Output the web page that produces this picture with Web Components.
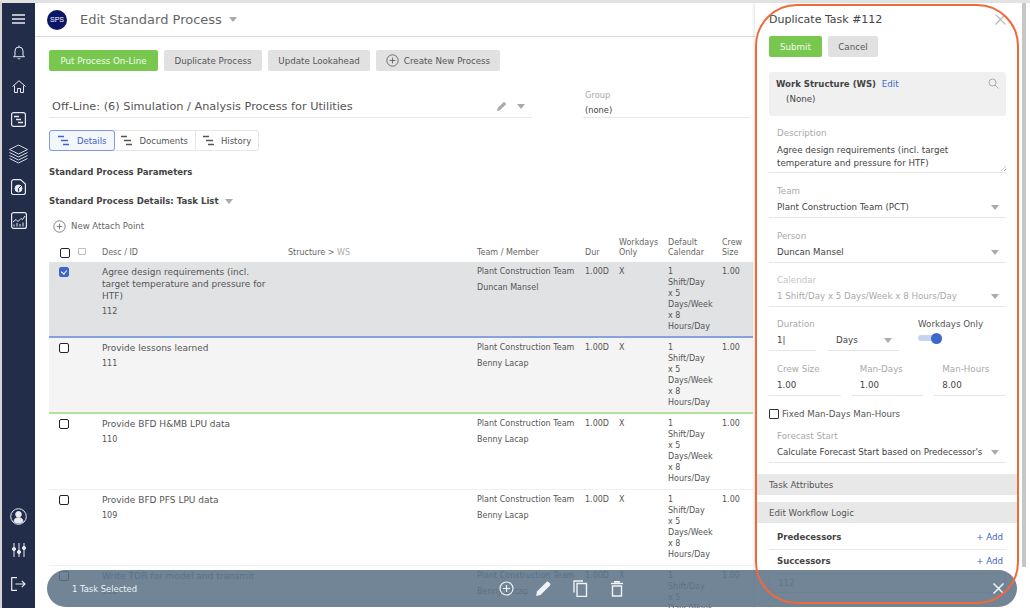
<!DOCTYPE html>
<html>
<head>
<meta charset="utf-8">
<title>Edit Standard Process</title>
<style>
  html, body { margin: 0; height: 608px; overflow: hidden; background: #fff; }
  body { font-family: "DejaVu Sans", sans-serif; color: #444; }
</style>
</head>
<body>
<app-shell>
  <side-nav slot="nav"></side-nav>
  <process-page slot="main"></process-page>
  <task-panel slot="panel"></task-panel>
</app-shell>
<selection-bar></selection-bar>
<focus-ring></focus-ring>

<script>
// Shared icon strings, the task bars icon is used a few times
const ganttIcon = `<svg width="11" height="11" viewBox="0 0 11 11" fill="none" stroke="currentColor" stroke-width="1.4"><path d="M0 1.500h6M3 5.500h7M5 9.500h6"/></svg>`;
const plusCircle = (size) => `<svg width="${size}" height="${size}" viewBox="0 0 16 16" fill="none" stroke="currentColor" stroke-width="1"><circle cx="8" cy="8" r="7"/><path d="M8 4.500v7M4.500 8h7"/></svg>`;
const caret = `<svg width="8" height="5" viewBox="0 0 8 5"><path d="M0 0h8L4 5z" fill="#aaa"/></svg>`;

class AppShell extends HTMLElement {
  constructor() {
    super();
    this.attachShadow({mode: 'open'}).innerHTML = `
      <style>
        :host { display: flex; height: 608px; width: 1030px; box-sizing: border-box; border-left: 2px solid #d4d4d4; border-top: 3px solid #e2e2e2; overflow: hidden; }
        .main { flex: 1; min-width: 0; }
      </style>
      <slot name="nav"></slot>
      <div class="main"><slot name="main"></slot></div>
      <slot name="panel"></slot>`;
  }
}

class SideNav extends HTMLElement {
  constructor() {
    super();
    this.attachShadow({mode: 'open'}).innerHTML = `
      <style>
        :host { display: flex; flex-direction: column; align-items: center; width: 33px; height: 100%; background: #222d4a; color: #e8eaf0; box-sizing: border-box; flex: none; }
        svg { display: block; fill: none; stroke: currentColor; stroke-width: 1; }
        .group { display: flex; flex-direction: column; align-items: center; width: 100%; }
        .cell { height: 33.700px; display: flex; align-items: center; justify-content: center; }
        .top { margin-top: -1px; }
        .spacer { flex: 1; }
        .bottom { padding-bottom: 7px; }
      </style>
      <div class="group top">
        <div class="cell"><svg width="13" height="10" viewBox="0 0 13 10" style="stroke-width:1.6"><path d="M0 1h13M0 5h13M0 9h13"/></svg></div>
        <div class="cell"><svg width="12" height="15" viewBox="0 0 12 15"><path d="M2 10.500V6a4 4 0 0 1 8 0v4.500l1.500 1.200H.5zM6 .5V2M4.800 13.200a1.300 1.300 0 0 0 2.400 0"/></svg></div>
        <div class="cell"><svg width="14" height="13" viewBox="0 0 14 13"><path d="M.5 6.500L7 .7l6.500 5.800M2.500 5.500v7h3V8.500h3v4h3v-7"/></svg></div>
        <div class="cell"><svg width="15" height="15" viewBox="0 0 15 15"><rect x=".6" y=".6" width="13.800" height="13.800" rx="2" stroke-width="1.200"/><path d="M3 4.500h5M5 7.500h5M7 10.500h5" stroke-width="1.300"/></svg></div>
        <div class="cell"><svg width="19" height="20" viewBox="0 0 19 20" style="stroke-width:.9"><path d="M9.500 1l9 4.500-9 4.500-9-4.500zM.5 8.500l9 4.500 9-4.500M.5 11.500l9 4.500 9-4.500M.5 14.500l9 4.500 9-4.500"/></svg></div>
        <div class="cell"><svg width="15" height="16" viewBox="0 0 15 16"><path d="M.6 2.500A2 2 0 0 1 2.500.6h7l4.900 4.400v8.500a2 2 0 0 1-2 2h-10a2 2 0 0 1-2-2z" stroke-width="1.200"/><circle cx="7.500" cy="9.500" r="3.500" fill="currentColor"/><path d="M7.500 9.500l2.500-2.500M7.500 9.500v3" stroke="#222d4a"/></svg></div>
        <div class="cell"><svg width="16" height="17" viewBox="0 0 16 17"><rect x=".6" y=".6" width="14.800" height="15.800" rx="2" stroke-width="1.200"/><path d="M2 10l3-2.500 2 2 3-3 1.500 1L14 4M3 14.500v-2M6 14.500v-3.500M9 14.500v-2.500M12 14.500v-4"/></svg></div>
      </div>
      <div class="spacer"></div>
      <div class="group bottom">
        <div class="cell"><svg width="17" height="17" viewBox="0 0 17 17"><circle cx="8.500" cy="8.500" r="7.800"/><circle cx="8.500" cy="6.300" r="2.800" fill="currentColor"/><path d="M4 13.500c.3-3 2-3.800 4.500-3.800s4.200.8 4.500 3.800a7 7 0 0 1-9 0z" fill="currentColor"/></svg></div>
        <div class="cell"><svg width="14" height="14" viewBox="0 0 14 14"><path d="M2 0v14M7 0v14M12 0v14"/><circle cx="2" cy="6" r="1.600" fill="currentColor"/><circle cx="7" cy="9" r="1.600" fill="currentColor"/><circle cx="12" cy="5" r="1.600" fill="currentColor"/></svg></div>
        <div class="cell"><svg width="15" height="14" viewBox="0 0 15 14" style="stroke-width:1.200"><path d="M6 .7H.7v12.600H6M4.500 7H14M10.800 3.800L14 7l-3.200 3.200"/></svg></div>
      </div>`;
  }
}

class ActionButton extends HTMLElement {
  constructor() {
    super();
    this.attachShadow({mode: 'open'}).innerHTML = `
      <style>
        :host { display: inline-flex; align-items: center; justify-content: center; gap: 5px; height: 21px; box-sizing: border-box; background: #e1e1e1; color: #555; border-radius: 2px; font-size: 8.700px; flex: none; }
        :host([primary]) { background: #78c850; color: #f4fbef; }
      </style>
      <slot></slot>`;
    this.style.width = this.getAttribute('w') + 'px';
  }
}

class ProcessPage extends HTMLElement {
  constructor() {
    super();
    this.attachShadow({mode: 'open'}).innerHTML = `
      <style>
        :host { display: block; height: 100%; color: #444; }
        .top { display: flex; align-items: center; height: 33px; border-bottom: 1px solid #dcdcdc; padding-left: 12px; }
        .logo { width: 20px; height: 20px; border-radius: 50%; background: #0b1766; color: #fff; font: 7px "Liberation Sans", sans-serif; display: flex; align-items: center; justify-content: center; margin-right: 13px; }
        .title { font-size: 13px; color: #666; margin-right: 7px; }
        .body { padding: 13px 0 0 14px; }
        .actions { display: flex; gap: 6px; }
        .process { display: flex; margin-top: 19px; }
        .select { width: 483px; height: 28px; box-sizing: border-box; border-bottom: 1px solid #e8e8e8; padding: 5px 0 0 3px; display: flex; align-items: center; font-size: 11.300px; color: #555; }
        .select .name { flex: 1; }
        .select svg { margin-right: 7px; }
        .pen { margin-right: 10px !important; }
        .group { margin-left: 51px; width: 167px; border-bottom: 1px solid #e8e8e8; font-size: 8.300px; padding-left: 2px; box-sizing: border-box; margin-top: -1px; height: 29px; }
        .group div:first-child { color: #aaa; line-height: 12px; }
        .group div:last-child { line-height: 18px; color: #444; }
        .tabs { display: inline-flex; margin-top: 12px; border: 1px solid #e6e6e6; border-radius: 3px; height: 21px; box-sizing: border-box; font-size: 8.500px; color: #555; vertical-align: top; }
        .tab { display: flex; align-items: center; gap: 7px; padding: 0 7px; border-right: 1px solid #e6e6e6; }
        .tab:last-child { border-right: 0; }
        .tab.on { color: #3f66c9; background: #f3f6fd; outline: 1px solid #7d9adf; border-radius: 2px; padding: 0 8px; gap: 8px; border-right: 0; }
        h4 { font-size: 8.550px; font-weight: bold; margin: 0; color: #444; line-height: 12px; }
        .params { margin-top: 15px; }
        .details { margin-top: 17px; display: flex; align-items: center; gap: 6px; }
        .attach { display: flex; align-items: center; gap: 5px; font-size: 8.550px; color: #666; margin: 12px 0 0 4px; height: 14px; }
      </style>
      <div class="top"><div class="logo">SPS</div><div class="title">Edit Standard Process</div>${caret}</div>
      <div class="body">
        <div class="actions">
          <action-button primary w="109">Put Process On-Line</action-button>
          <action-button w="98">Duplicate Process</action-button>
          <action-button w="102">Update Lookahead</action-button>
          <action-button w="124">${plusCircle(13)}Create New Process</action-button>
        </div>
        <div class="process">
          <div class="select"><span class="name">Off-Line: (6) Simulation / Analysis Process for Utilities</span>
            <svg class="pen" width="10" height="10" viewBox="0 0 10 10"><path d="M0 10l.7-3L7 .7 9.300 3 3 9.300z" fill="#aaa"/></svg>${caret}</div>
          <div class="group"><div>Group</div><div>(none)</div></div>
        </div>
        <div class="tabs">
          <div class="tab on">${ganttIcon}Details</div>
          <div class="tab">${ganttIcon}Documents</div>
          <div class="tab">${ganttIcon}History</div>
        </div>
        <h4 class="params">Standard Process Parameters</h4>
        <h4 class="details"><span>Standard Process Details: Task List</span>${caret}</h4>
        <div class="attach">${plusCircle(13)}New Attach Point</div>
        <task-table></task-table>
      </div>`;
  }
}

const columns = '53px 186px 189px 108px 34px 49px 54px 31px';

class TaskTable extends HTMLElement {
  constructor() {
    super();
    const tasks = [
      {t: 'Agree design requirements (incl. target temperature and pressure for HTF)', id: 112, m: 'Duncan Mansel', s: 'selected'},
      {t: 'Provide lessons learned', id: 111, m: 'Benny Lacap', s: 'next'},
      {t: 'Provide BFD H&amp;MB LPU data', id: 110, m: 'Benny Lacap', s: ''},
      {t: 'Provide BFD PFS LPU data', id: 109, m: 'Benny Lacap', s: ''},
      {t: 'Write TOR for model and transmit', id: 108, m: 'Benny Lacap', s: ''}
    ];
    const rows = tasks.map(x => `
      <div class="row ${x.s}">
        <div class="chk"><span class="box"></span></div>
        <div class="desc"><div>${x.t}</div><div class="id">${x.id}</div></div>
        <div></div>
        <div class="team"><div>Plant Construction Team</div><div class="mem">${x.m}</div></div>
        <div>1.00D</div>
        <div>X</div>
        <div class="cal">1 Shift/Day x 5 Days/Week x 8 Hours/Day</div>
        <div>1.00</div>
      </div>`).join('');
    this.attachShadow({mode: 'open'}).innerHTML = `
      <style>
        :host { display: block; margin-top: 3px; width: 704px; font-size: 8px; color: #555; }
        .head, .row { display: grid; grid-template-columns: ${columns}; }
        .head { align-items: end; line-height: 10px; color: #666; padding-bottom: 4px; box-sizing: border-box; height: 26px; }
        .head .muted { color: #aaa; }
        .row { height: 76px; box-sizing: border-box; border-bottom: 1px solid #f1f1f1; padding-top: 4px; line-height: 11px; overflow: hidden; }
        .row.selected { background: #e1e2e4; border-bottom: 2px solid #86a2de; }
        .row.next { background: #f4f4f4; border-bottom: 2px solid #b3e09d; }
        .chk { padding: 1px 0 0 10px; }
        .box { display: block; width: 8px; height: 8px; border: 1px solid #222; border-radius: 2px; background: #fff; }
        .selected .box { background: #3f66c9; border-color: #3f66c9; position: relative; }
        .selected .box::after { content: ""; position: absolute; left: 2px; top: 1px; width: 3px; height: 4px; border: solid #fff; border-width: 0 1px 1px 0; transform: rotate(40deg); }
        .desc { font-size: 9px; line-height: 12px; padding-right: 10px; }
        .id { font-size: 8px; margin-top: 4px; }
        .mem { margin-top: 5px; }
        .cal { width: 43px; }
        .hchk { display: flex; align-items: center; gap: 8px; padding-left: 11px; }
        .hchk .box { margin-top: -2px; }
        .mini { width: 6px; height: 5px; border: 1px solid #bbb; border-radius: 1px; margin-top: -5px; }
      </style>
      <div class="head">
        <div class="hchk"><span class="box"></span><span class="mini"></span></div>
        <div>Desc / ID</div>
        <div>Structure &gt; <span class="muted">WS</span></div>
        <div>Team / Member</div>
        <div>Dur</div>
        <div>Workdays<br>Only</div>
        <div>Default<br>Calendar</div>
        <div>Crew<br>Size</div>
      </div>
      ${rows}`;
  }
}

class FormField extends HTMLElement {
  constructor() {
    super();
    const sel = this.hasAttribute('select');
    this.attachShadow({mode: 'open'}).innerHTML = `
      <style>
        :host { display: block; border-bottom: 1px solid #e6e6e6; height: 33px; box-sizing: border-box; color: #444; }
        :host([disabled]) { color: #aaa; }
        .label { color: #aaa; line-height: 12px; padding-left: 8px; }
        :host([disabled]) .label { color: #c4c4c4; }
        .value { display: flex; align-items: center; justify-content: space-between; line-height: 21px; padding: 0 7px 0 8px; white-space: nowrap; }
      </style>
      <div class="label">${this.getAttribute('label')}</div>
      <div class="value"><span><slot></slot></span>${sel ? caret : ''}</div>`;
  }
}

class TaskPanel extends HTMLElement {
  constructor() {
    super();
    this.attachShadow({mode: 'open'}).innerHTML = `
      <style>
        :host { display: block; width: 275px; height: 100%; flex: none; background: #fff; box-shadow: -1px 0 3px rgba(0,0,0,.12); box-sizing: border-box; font-size: 8.700px; color: #444; position: relative; }
        .scroll { position: absolute; right: 4px; top: 0; width: 4px; height: 564px; background: #c6c6c6; }
        .in { padding: 8px 24px 0 14px; }
        .head { display: flex; justify-content: space-between; align-items: center; font-size: 11px; color: #444; height: 16px; }
        .btns { display: flex; gap: 6px; margin-top: 9px; }
        .ws { background: #f0f0f0; border-radius: 3px; height: 44px; margin-top: 15px; padding: 7px; box-sizing: border-box; position: relative; }
        .ws b { color: #444; font-size: 8.550px; }
        .ws a, .add { color: #3f66c9; }
        .ws a { margin-left: 3px; }
        .ws .none { margin: 5px 0 0 10px; }
        .ws svg { position: absolute; right: 7px; top: 6px; }
        .fields { display: flex; flex-direction: column; gap: 12px; margin-top: 11px; }
        .desc { height: 46px; border-bottom: 1px solid #e6e6e6; box-sizing: border-box; position: relative; }
        .desc .l { color: #aaa; line-height: 12px; padding-left: 8px; }
        .desc .t { line-height: 13px; padding: 5px 8px 0; }
        .grip { position: absolute; right: 0; bottom: 1px; width: 5px; height: 5px; background: repeating-linear-gradient(135deg, transparent 0 1px, #999 1px 2px); clip-path: polygon(100% 0, 100% 100%, 0 100%); }
        .tight { margin-top: -1px; }
        .dur { display: flex; align-items: flex-start; gap: 12px; }
        .dur form-field:nth-child(1) { width: 47px; }
        .dur form-field:nth-child(2) { width: 71px; }
        .wd { margin-left: 7px; line-height: 12px; color: #555; }
        .sw { width: 24px; height: 6px; background: #c8d3ef; border-radius: 3px; position: relative; margin-top: 5px; }
        .sw::after { content: ""; position: absolute; right: 0; top: -2.500px; width: 11px; height: 11px; border-radius: 50%; background: #3f66c9; }
        .trio { display: grid; grid-template-columns: repeat(3, 1fr); gap: 11px; }
        .fixed { display: flex; align-items: center; gap: 3px; color: #555; height: 12px; margin: 0 0 -2px; }
        .fixed span { width: 8px; height: 8px; border: 1px solid #333; border-radius: 1px; }
        .band { background: #e8e8e8; height: 21px; display: flex; align-items: center; margin: 11px -11px 0 -13px; padding-left: 13px; color: #555; }
        .band + .band { margin-top: 7px; }
        .link { display: flex; justify-content: space-between; align-items: center; height: 23.500px; padding: 0 3px 0 8px; box-sizing: border-box; }
        .link b { color: #444; font-size: 8.550px; }
        .link:first-child { border-bottom: 1px solid #e8e8e8; }
        .pre { margin-top: 3px; }
        .pill { height: 18px; border: 1px solid #ddd; padding-left: 8px; line-height: 18px; color: #888; }
        .close svg { display: block; stroke: #bbb; }
        .calc { letter-spacing: -.08px; }
      </style>
      <div class="scroll"></div>
      <div class="in">
        <div class="head"><span>Duplicate Task #112</span><span class="close"><svg width="11" height="11" viewBox="0 0 11 11" stroke-width="1.200"><path d="M.5.5l10 10M10.500.5l-10 10"/></svg></span></div>
        <div class="btns"><action-button primary w="53">Submit</action-button><action-button w="50">Cancel</action-button></div>
        <div class="ws">
          <div><b>Work Structure (WS)</b> <a>Edit</a></div>
          <div class="none">(None)</div>
          <svg width="11" height="11" viewBox="0 0 11 11" fill="none" stroke="#aaa" stroke-width="1"><circle cx="4.500" cy="4.500" r="3.500"/><path d="M7 7l3.500 3.500"/></svg>
        </div>
        <div class="fields">
          <div class="desc"><div class="l">Description</div><div class="t">Agree design requirements (incl. target temperature and pressure for HTF)</div><div class="grip"></div></div>
          <form-field label="Team" select>Plant Construction Team (PCT)</form-field>
          <form-field label="Person" select>Duncan Mansel</form-field>
          <form-field class="tight" label="Calendar" select disabled>1 Shift/Day x 5 Days/Week x 8 Hours/Day</form-field>
          <div class="dur tight">
            <form-field label="Duration">1|</form-field>
            <form-field label="&nbsp;" select>Days</form-field>
            <div class="wd">Workdays Only<div class="sw"></div></div>
          </div>
          <div class="trio">
            <form-field label="Crew Size">1.00</form-field>
            <form-field label="Man-Days">1.00</form-field>
            <form-field label="Man-Hours">8.00</form-field>
          </div>
          <div class="fixed"><span></span>Fixed Man-Days Man-Hours</div>
          <form-field label="Forecast Start" select><span class="calc">Calculate Forecast Start based on Predecessor's</span></form-field>
        </div>
        <div class="band">Task Attributes</div>
        <div class="band">Edit Workflow Logic</div>
        <div class="pre">
          <div class="link"><b>Predecessors</b><span class="add">+ Add</span></div>
          <div class="link"><b>Successors</b><span class="add">+ Add</span></div>
          <div class="pill">112</div>
        </div>
      </div>`;
  }
}

class SelectionBar extends HTMLElement {
  constructor() {
    super();
    this.attachShadow({mode: 'open'}).innerHTML = `
      <style>
        :host { position: absolute; left: 47px; top: 570px; width: 970px; height: 37px; border-radius: 19px; background: rgba(93,116,137,.88); color: #f0f3f6; display: flex; align-items: center; box-sizing: border-box; padding: 0 13px 0 25px; font-size: 8.400px; font-family: "DejaVu Sans", sans-serif; }
        .label { width: 427px; }
        .icons { display: flex; gap: 22px; align-items: center; flex: 1; }
        svg { display: block; fill: none; stroke: currentColor; stroke-width: 1.400; }
      </style>
      <div class="label">1 Task Selected</div>
      <div class="icons">
        <svg width="15" height="15" viewBox="0 0 15 15" style="stroke-width:1.200"><circle cx="7.500" cy="7.500" r="6.500"/><path d="M7.500 4v7M4 7.500h7"/></svg>
        <svg width="15" height="15" viewBox="0 0 15 15"><path d="M0 15l1-4.500L10.500 1a1.500 1.500 0 0 1 2 0l1.500 1.500a1.500 1.500 0 0 1 0 2L4.500 14z" fill="currentColor" stroke="none"/></svg>
        <svg width="15" height="17" viewBox="0 0 15 17"><path d="M4 3.500h9.500v13H4zM1 12.500V1h9"/></svg>
        <svg width="14" height="16" viewBox="0 0 14 16"><path d="M1 2.500h12M4 .8h6M2.500 5h9v10h-9z"/></svg>
      </div>
      <svg width="11" height="11" viewBox="0 0 11 11" style="stroke-width:1.500"><path d="M.5.5l10 10M10.500.5l-10 10"/></svg>`;
  }
}

// orange marker drawn over the screenshot
class FocusRing extends HTMLElement {
  constructor() {
    super();
    this.attachShadow({mode: 'open'}).innerHTML = `
      <style>
        :host { position: absolute; left: 755px; top: 4px; width: 264px; height: 600px; box-sizing: border-box; border: 2px solid #f0693a; border-radius: 42px; pointer-events: none; }
      </style>`;
  }
}

customElements.define('app-shell', AppShell);
customElements.define('side-nav', SideNav);
customElements.define('action-button', ActionButton);
customElements.define('process-page', ProcessPage);
customElements.define('task-table', TaskTable);
customElements.define('form-field', FormField);
customElements.define('task-panel', TaskPanel);
customElements.define('selection-bar', SelectionBar);
customElements.define('focus-ring', FocusRing);
</script>
</body>
</html>
